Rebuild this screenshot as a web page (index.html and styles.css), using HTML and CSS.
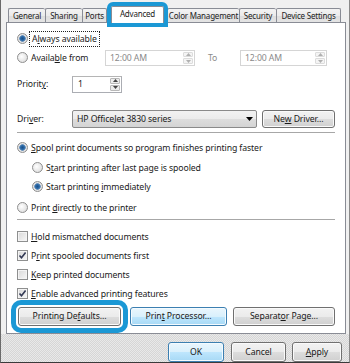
FILE: index.html
```html
<!DOCTYPE html>
<html lang="en">
<head>
  <meta charset="UTF-8" />
  <title>Printer Properties - Advanced</title>
  <link rel="stylesheet" href="styles.css">
</head>
<body>
  <div class="dialog">
    <div class="tabs">
      <div class="tab w-general">General</div>
      <div class="tab w-sharing">Sharing</div>
      <div class="tab w-ports">Ports</div>
      <div class="tab active">Advanced</div>
      <div class="tab w-color">Color Management</div>
      <div class="tab w-security">Security</div>
      <div class="tab w-device">Device Settings</div>
    </div>

    <div class="panel">
      <div class="row r-always">
        <span class="radio on"></span>
        <span class="focus">A<u>l</u>ways available</span>
      </div>

      <div class="row r-from">
        <span class="radio"></span>
        <span class="lbl-from">Availa<u>b</u>le from</span>
        <div class="field time t1">
          <span class="ph">12:00 AM</span>
          <span class="spin"><i class="up"></i><i class="down"></i></span>
        </div>
        <span class="to">To</span>
        <div class="field time t2">
          <span class="ph">12:00 AM</span>
          <span class="spin"><i class="up"></i><i class="down"></i></span>
        </div>
      </div>

      <div class="row r-priority">
        <span class="lbl">Priorit<u>y</u>:</span>
        <div class="field prio">
          <span>1</span>
          <span class="spin on"><i class="up"></i><i class="down"></i></span>
        </div>
      </div>

      <div class="row r-driver">
        <span class="lbl">Dri<u>v</u>er:</span>
        <div class="select">
          <span>HP OfficeJet 3830 series</span>
          <svg class="caret" width="7" height="4" viewBox="0 0 7 4"><path d="M0 0h7L3.5 4z" fill="#000"/></svg>
        </div>
        <button class="btn b-newdriver">Ne<u>w</u> Driver...</button>
      </div>

      <div class="sep s1"></div>

      <div class="row r-spool">
        <span class="radio on"></span>
        <span><u>S</u>pool print documents so program finishes printing faster</span>
      </div>
      <div class="row sub r-after">
        <span class="radio"></span>
        <span>S<u>t</u>art printing after last page is spooled</span>
      </div>
      <div class="row sub r-imm">
        <span class="radio on"></span>
        <span>Start printing <u>i</u>mmediately</span>
      </div>
      <div class="row r-direct">
        <span class="radio"></span>
        <span>Print <u>d</u>irectly to the printer</span>
      </div>

      <div class="sep s2"></div>

      <div class="row r-hold">
        <span class="check"></span>
        <span><u>H</u>old mismatched documents</span>
      </div>
      <div class="row r-next">
        <span class="check on"></span>
        <span>P<u>r</u>int spooled documents first</span>
      </div>
      <div class="row r-next">
        <span class="check"></span>
        <span><u>K</u>eep printed documents</span>
      </div>
      <div class="row r-next">
        <span class="check on"></span>
        <span><u>E</u>nable advanced printing features</span>
      </div>

      <div class="button-row">
        <button class="btn b-defaults">Printing De<u>f</u>aults...</button>
        <button class="btn hot b-processor">Prin<u>t</u> Processor...</button>
        <button class="btn b-separator">Separat<u>o</u>r Page...</button>
      </div>
    </div>

    <div class="footer">
      <button class="btn hot b-ok">OK</button>
      <button class="btn b-cancel">Cancel</button>
      <button class="btn b-apply"><u>A</u>pply</button>
    </div>
  </div>
</body>
</html>
```

FILE: styles.css
```css
* {
  box-sizing: border-box;
}

body {
  margin: 0;
  font-family: "Noto Sans", "Open Sans", sans-serif;
  font-size: 8.7px;
  letter-spacing: -0.1px;
  color: #1a1a1a;
  background-color: #f0f0f0;
}

u {
  text-decoration-thickness: 1px;
  text-underline-offset: 1px;
}

.dialog {
  width: 350px;
  height: 363px;
  overflow: hidden;
  display: flex;
  flex-direction: column;
  border-left: 1px solid #6a6a6a;
  border-right: 1px solid #8a8a8a;
  border-bottom: 1px solid #3a3a3a;
}

/* tabs */

.tabs {
  display: flex;
  align-items: flex-end;
  height: 22px;
  padding-left: 7px;
}

.tab {
  height: 14px;
  line-height: 13px;
  font-size: 8px;
  letter-spacing: -0.2px;
  text-align: center;
  border: 1px solid #898c95;
  border-right: none;
  border-bottom: none;
  border-radius: 2px 2px 0 0;
  background: linear-gradient(#f3f3f3, #ebebeb 50%, #dddddd 51%, #e4e4e4);
  color: #222;
  white-space: nowrap;
  overflow: hidden;
}

.tab.w-general { width: 37px; }
.tab.w-sharing { width: 37px; }
.tab.w-ports { width: 25px; border-right: 1px solid #898c95; }
.tab.w-color { width: 72px; }
.tab.w-security { width: 37px; border-right: none; }
.tab.w-device { width: 65px; border-right: 1px solid #898c95; }

.tab.active {
  width: 53px;
  height: 17px;
  line-height: 13px;
  margin: 0 3px -1px 4px;
  background: #fff;
  position: relative;
  z-index: 1;
  overflow: visible;
  border-right: 1px solid #898c95;
  outline: 4px solid #1b98d5;
  outline-offset: 0;
}

/* panel */

.panel {
  margin: 0 3px 0 5px;
  height: 315px;
  background: #fff;
  border: 1px solid #898c95;
  padding: 8px 10px 0 10px;
}

.row {
  display: flex;
  align-items: center;
  height: 16px;
  white-space: nowrap;
}

.row.sub {
  padding-left: 15px;
}

.r-from { margin-top: 3px; }
.r-priority { margin-top: 10px; height: 17px; }
.r-driver { margin-top: 17px; height: 18px; }
.r-spool { margin-top: 7px; }
.r-after { margin-top: 4px; }
.r-imm { margin-top: 3px; }
.r-direct { margin-top: 5px; }
.r-hold { margin-top: 9px; }
.r-next { margin-top: 3px; }

.sep {
  height: 1px;
  background: #a7a7a7;
}

.s1 { margin-top: 4px; }
.s2 { margin-top: 3px; }

/* radios and checkboxes */

.radio {
  width: 11px;
  height: 11px;
  flex: none;
  margin-right: 3px;
  border-radius: 50%;
  border: 1px solid #8f8f8f;
  background: radial-gradient(circle at 40% 40%, #ffffff, #e2e2e2 70%, #cfcfcf);
}

.radio.on {
  background: radial-gradient(circle, #1c4f86 0, #2b6aa8 2px, #6d94bd 3px, #e6e6e6 3.6px, #d4d4d4 100%);
}

.check {
  width: 11px;
  height: 11px;
  flex: none;
  margin-right: 3px;
  border: 1px solid #8e8f8f;
  background: linear-gradient(135deg, #d8d8d8, #f7f7f7);
  box-shadow: inset 0 0 0 1px #f4f4f4;
}

.check.on {
  background:
    url("data:image/svg+xml;utf8,<svg xmlns='http://www.w3.org/2000/svg' width='9' height='9' viewBox='0 0 9 9'><path d='M1.5 4.5l2 2.3L7.6 1.6' fill='none' stroke='%23333a55' stroke-width='1.6'/></svg>") center / 9px 9px no-repeat,
    linear-gradient(135deg, #d8d8d8, #f7f7f7);
}

.focus {
  outline: 1px dotted #222;
  outline-offset: 1px;
  padding: 0 1px;
}

/* fields */

.lbl {
  width: 55px;
  flex: none;
}

.lbl-from {
  width: 74px;
  flex: none;
}

.field {
  display: flex;
  align-items: center;
  justify-content: space-between;
  height: 100%;
  border: 1px solid #abadb3;
  border-top-color: #b5b5b5;
  padding-left: 4px;
  background: #fff;
}

.time {
  border-color: #d5d5d5;
}

.t1 { width: 90px; }
.t2 { width: 87px; }

.ph {
  color: #8a8a8a;
}

.to {
  width: 45px;
  flex: none;
  padding-left: 13px;
  color: #8a8a8a;
}

.prio {
  width: 50px;
  padding-left: 5px;
}

.spin {
  display: flex;
  flex-direction: column;
  width: 10px;
  height: 100%;
  padding: 1px 0;
  gap: 1px;
  margin-right: 1px;
}

.spin i {
  flex: 1;
  border: 1px solid #dcdcdc;
  border-radius: 1px;
  background: #f4f4f4 center / 5px 3px no-repeat;
}

.spin .up {
  background-image: url("data:image/svg+xml;utf8,<svg xmlns='http://www.w3.org/2000/svg' width='5' height='3'><path d='M0 3h5L2.5 0z' fill='%23b0b0b0'/></svg>");
}

.spin .down {
  background-image: url("data:image/svg+xml;utf8,<svg xmlns='http://www.w3.org/2000/svg' width='5' height='3'><path d='M0 0h5L2.5 3z' fill='%23b0b0b0'/></svg>");
}

.spin.on i {
  border-color: #b8b8b8;
  background-color: #ececec;
}

.spin.on .up {
  background-image: url("data:image/svg+xml;utf8,<svg xmlns='http://www.w3.org/2000/svg' width='5' height='3'><path d='M0 3h5L2.5 0z' fill='%23444'/></svg>");
}

.spin.on .down {
  background-image: url("data:image/svg+xml;utf8,<svg xmlns='http://www.w3.org/2000/svg' width='5' height='3'><path d='M0 0h5L2.5 3z' fill='%23444'/></svg>");
}

.select {
  display: flex;
  align-items: center;
  justify-content: space-between;
  width: 185px;
  height: 100%;
  padding: 0 3px 0 4px;
  border: 1px solid #8a8a8a;
  border-radius: 2px;
  background: linear-gradient(#f2f2f2, #ebebeb 50%, #dddddd 51%, #d4d4d4);
}

/* buttons */

.btn {
  font: inherit;
  letter-spacing: inherit;
  color: #1a1a1a;
  height: 19px;
  padding: 0;
  border: 1px solid #707070;
  border-radius: 3px;
  background: linear-gradient(#f2f2f2, #ebebeb 50%, #dddddd 51%, #d0d0d0);
  box-shadow: inset 0 0 0 1px #fafafa;
  white-space: nowrap;
}

.btn.hot {
  border-color: #3c7fb1;
  background: linear-gradient(#eaf6fd, #d9f0fc 50%, #bee6fd 51%, #a7d9f5);
  box-shadow: inset 0 0 0 1px #f4fbff;
}

.b-newdriver {
  width: 73px;
  height: 100%;
  margin-left: 5px;
}

.button-row {
  display: flex;
  margin-top: 5px;
  padding-left: 1px;
}

.b-defaults {
  width: 103px;
  outline: 5px solid #1b98d5;
  outline-offset: 2px;
}

.b-processor {
  width: 97px;
  margin-left: 9px;
}

.b-separator {
  width: 102px;
  margin-left: 6px;
}

/* footer */

.footer {
  flex: 1;
  display: flex;
  justify-content: flex-end;
  align-items: flex-start;
  gap: 6px;
  padding: 8px 7px 0 0;
  background: repeating-conic-gradient(#e9e9e9 0 25%, #d6d6d6 0 50%) 0 0 / 2px 2px;
}

.footer .btn {
  height: 20px;
}

.b-ok { width: 56px; }
.b-cancel { width: 55px; margin-left: 1px; }
.b-apply { width: 50px; }
```
